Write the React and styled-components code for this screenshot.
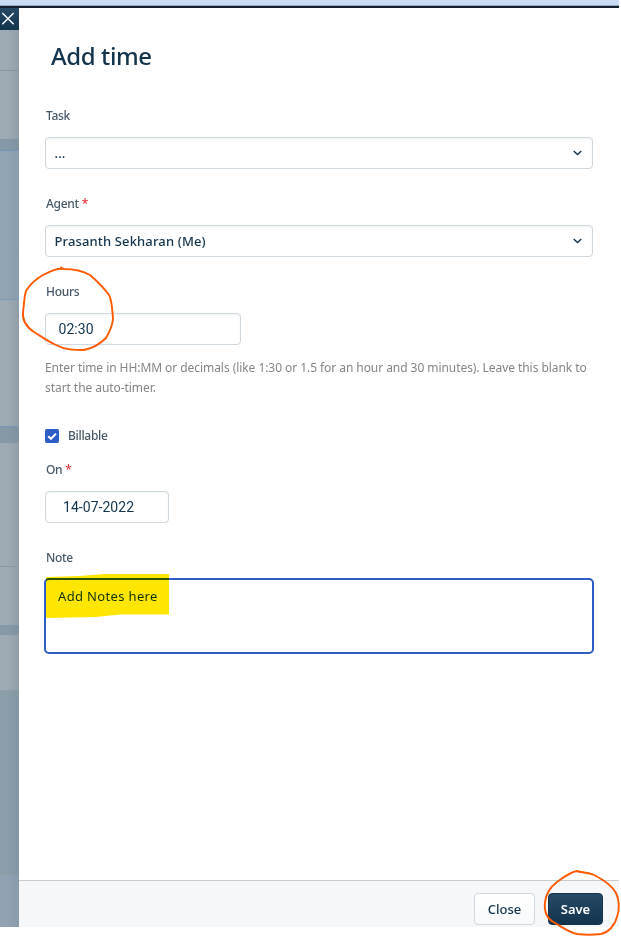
import React from "react";
import styled, { createGlobalStyle } from "styled-components";

const Global = createGlobalStyle`
  * { box-sizing: border-box; }
  body { margin: 0; background: #fff; font-family: "Noto Sans", sans-serif; color: #12344d; }
`;
const Screen = styled.div`
  position: relative;
  width: 621px;
  height: 937px;
  padding: 0 2px 10px 0;
  display: flex;
  flex-direction: column;
`;
const TopBar = styled.div`
  height: 8px;
  flex: none;
  background: linear-gradient(#cbdcf7 0 5px, #93a8c3 5px 6px, #15202e 6px 8px);
`;
const Body = styled.div`
  flex: 1;
  display: flex;
`;
const Backdrop = styled.div`
  width: 19px;
  display: flex;
  flex-direction: column;
  background: linear-gradient(90deg, rgba(50, 65, 85, 0) 35%, rgba(50, 65, 85, 0.12)), #9eabb4;
`;
const Strip = styled.div`
  height: ${(p) => p.$h}px;
  background: ${(p) => p.$bg || "transparent"};
  border-bottom: ${(p) => (p.$line ? `1px solid ${p.$line}` : "0")};
`;
const CloseTab = styled.button`
  width: 19px;
  height: 22px;
  padding: 2px 0 0 1px;
  border: 0;
  display: flex;
  align-items: flex-start;
  background: linear-gradient(#264966, #12344d);
`;
const Panel = styled.main`
  width: 600px;
  display: flex;
  flex-direction: column;
  background: #fff;
`;
const Content = styled.form`
  flex: 1;
  padding: 30px 25px 0 26px;
`;
const Title = styled.h1`
  margin: 0 0 33px;
  padding-left: 6px;
  font-size: 24px;
  line-height: 36px;
  font-weight: 500;
  letter-spacing: -0.4px;
`;
const Field = styled.div`
  margin-bottom: ${(p) => p.$gap ?? 26}px;
`;
const Label = styled.label`
  display: block;
  height: 18px;
  margin-bottom: 12px;
  padding-left: 1px;
  font-size: 12px;
  line-height: 18px;
  font-weight: 500;
  letter-spacing: -0.3px;
  color: #475867;
`;
const Required = styled.span`
  color: #e43538;
`;
const Control = styled.div`
  width: ${(p) => p.$w || 548}px;
  height: 32px;
  display: flex;
  align-items: center;
  justify-content: space-between;
  padding: 0 10px 0 ${(p) => p.$pl || 8.5}px;
  border: 1px solid #cfd7df;
  border-radius: 4px;
  box-shadow: inset 0 1px 2px rgba(24, 50, 71, 0.05);
  font-family: ${(p) => (p.$plain ? "Roboto" : "\"Noto Sans\"")}, sans-serif;
  font-size: ${(p) => (p.$plain ? 14 : 13)}px;
  font-weight: ${(p) => (p.$plain ? 400 : 500)};
  letter-spacing: ${(p) => (p.$plain ? 0.04 : 0.14)}px;
`;
const Help = styled.p`
  margin: 13px 0 29px;
  font-size: 12px;
  line-height: 20px;
  color: #858585;
  white-space: nowrap;
  letter-spacing: -0.06px;
`;
const CheckRow = styled.div`
  height: 18px;
  display: flex;
  align-items: center;
  gap: 8px;
  margin: 0 0 16px;
  ${Label} { margin: 0; }
`;
const Checkbox = styled.span`
  width: 14px;
  height: 14px;
  border-radius: 2px;
  background: #2c5cc5;
  display: flex;
`;
const NoteBox = styled.div`
  width: 550px;
  height: 76px;
  margin: -1px 0 0 -1px;
  padding: 6px 12px;
  border: 2px solid #2c5cc5;
  border-radius: 5px;
  font-size: 13px;
  line-height: 20px;
  letter-spacing: 0.35px;
`;
const Footer = styled.footer`
  height: 47px;
  display: flex;
  justify-content: flex-end;
  gap: 13px;
  padding: 12px 16px 0 0;
  border-top: 1px solid #c9cbcd;
  background: #f5f7f9;
`;
const Button = styled.button`
  width: ${(p) => (p.$primary ? 55 : 61)}px;
  height: 32px;
  padding: 0;
  border: 1px solid ${(p) => (p.$primary ? "#12344d" : "#cfd7df")};
  border-radius: 4px;
  background: ${(p) => (p.$primary ? "linear-gradient(#264966, #12344d)" : "linear-gradient(#fff, #f7f9fa)")};
  color: ${(p) => (p.$primary ? "#fff" : "#12344d")};
  font: ${(p) => (p.$primary ? 600 : 500)} 13px "Noto Sans", sans-serif;
`;
const Marks = styled.svg`
  position: absolute;
  left: 0;
  top: 0;
  pointer-events: none;
  mix-blend-mode: multiply;
`;
const Pen = styled(Marks)`
  mix-blend-mode: normal;
`;

const Chevron = () => (
  <svg width="9" height="6" viewBox="0 0 9 6" fill="none" stroke="#12344d" strokeWidth="1.4">
    <path d="M.7 1 4.5 4.6 8.3 1" />
  </svg>
);

export default function App() {
  return (
    <>
      <Global />
      <Screen>
        <TopBar />
        <Body>
          <Backdrop>
            <CloseTab aria-label="Close panel">
              <svg width="15" height="17" viewBox="0 0 15 17" stroke="#fff" strokeWidth="1.5">
                <path d="M1.3 3 12.7 14.2M12.7 3 1.3 14.2" />
              </svg>
            </CloseTab>
            <Strip $h={41} $line="#8395a5" />
            <Strip $h={69} $line="#8395a5" />
            <Strip $h={11} $bg="rgba(105,130,148,.45)" $line="#7194b8" />
            <Strip $h={149} $bg="rgba(125,155,180,.4)" $line="#7c9ab8" />
            <Strip $h={127} $line="#7596b8" />
            <Strip $h={16} $bg="rgba(105,130,148,.45)" />
            <Strip $h={124} $line="#8b99a5" />
            <Strip $h={58} />
            <Strip $h={10} $bg="rgba(105,130,148,.45)" />
            <Strip $h={55} />
            <Strip $h={185} $bg="rgba(115,142,158,.45)" />
            <Strip $h={52} $bg="rgba(125,150,175,.4)" />
          </Backdrop>
          <Panel>
            <Content>
              <Title>Add time</Title>
              <Field>
                <Label>Task</Label>
                <Control>...<Chevron /></Control>
              </Field>
              <Field>
                <Label>Agent <Required>*</Required></Label>
                <Control>Prasanth Sekharan (Me)<Chevron /></Control>
              </Field>
              <Field $gap={0}>
                <Label>Hours</Label>
                <Control $w={196} $pl={12.5} $plain>02:30</Control>
              </Field>
              <Help>
                Enter time in HH:MM or decimals (like 1:30 or 1.5 for an hour and 30 minutes). Leave this blank to<br />
                start the auto-timer.
              </Help>
              <CheckRow>
                <Checkbox>
                  <svg width="14" height="14" viewBox="0 0 14 14" fill="none" stroke="#fff" strokeWidth="2">
                    <path d="M3.2 7.2 6 9.8 11 4.6" />
                  </svg>
                </Checkbox>
                <Label>Billable</Label>
              </CheckRow>
              <Field>
                <Label>On <Required>*</Required></Label>
                <Control $w={124} $pl={17} $plain>14-07-2022</Control>
              </Field>
              <Field>
                <Label>Note</Label>
                <NoteBox>Add Notes here</NoteBox>
              </Field>
            </Content>
            <Footer>
              <Button>Close</Button>
              <Button $primary>Save</Button>
            </Footer>
          </Panel>
        </Body>
        <Marks width="621" height="937">
          <path fill="#ffe600" d="M46 577 80 576 104 574H169V614.5H120L96 617 46 618Z" />
        </Marks>
        <Pen width="621" height="937" fill="none" stroke="#ff5a00" strokeWidth="1.9" strokeLinecap="round" strokeLinejoin="round">
          <path d="M61 267.5 64 269C57 268 51 271 43 275 36 279 29 286 26 291 24 297 24 306 23 312 22 322 28 328 34 332 42 337 49 342 56 345 65 350 75 350 84 350 94 348 100 344 106 338 110 331 113 325 113 318 112 308 112 300 109 295 104 288 97 281 90 275 81 270 72 269 64 269" />
          <path d="M580 872 577 871C570 872 564 877 557 882 549 888 546 894 545 902 544 911 547 919 555 923 562 927 568 932 577 934 585 935 593 935 601 934 609 932 615 925 617 917 620 909 619 899 616 893 611 884 602 879 594 875 588 872 582 873 577 871" />
        </Pen>
      </Screen>
    </>
  );
}
